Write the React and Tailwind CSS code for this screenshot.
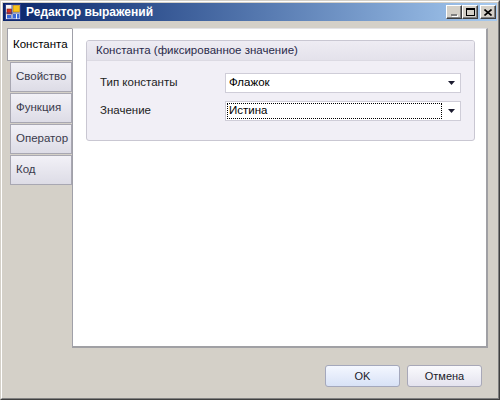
const font = { fontFamily: '"Liberation Sans", Arial, sans-serif' };

function AppIcon() {
  return (
    <svg width="16" height="16" viewBox="0 0 16 16">
      <rect x="0.5" y="0.5" width="15" height="15" fill="#f4f4f4" stroke="#2c3e8c" />
      <rect x="8" y="1.5" width="6.5" height="6.5" fill="#f7c21a" stroke="#b07a00" strokeWidth="0.6" />
      <rect x="2" y="5" width="4.5" height="5" fill="#d83020" stroke="#801810" strokeWidth="0.6" />
      <rect x="2" y="11" width="4" height="3.5" fill="#3a6ad8" />
      <rect x="8" y="10" width="3" height="4.5" fill="#3a6ad8" />
      <rect x="12" y="10" width="2.5" height="4.5" fill="#3a6ad8" />
      <line x1="7" y1="1" x2="7" y2="15" stroke="#2c3e8c" strokeWidth="0.8" />
      <line x1="1" y1="9" x2="15" y2="9" stroke="#2c3e8c" strokeWidth="0.8" />
    </svg>
  );
}

function CaptionButton({ children }) {
  return (
    <div className="w-[16px] h-[14px] bg-[#d4d0c8] border-t border-l border-t-white border-l-white border-r border-b border-r-[#404040] border-b-[#404040] shadow-[inset_-1px_-1px_#808080] flex items-center justify-center">
      {children}
    </div>
  );
}

function Combo({ value, focused }) {
  return (
    <div className="w-[236px] h-[20px] bg-white border border-[#cfcdd8] flex items-center">
      <div className="flex-1 h-full p-[1px]">
        <div
          className={
            focused
              ? "h-full border border-dotted border-black flex items-center pl-[1px] text-[11.5px] text-black"
              : "h-full border border-transparent flex items-center pl-[1px] text-[11.5px] text-black"
          }
        >
          {value}
        </div>
      </div>
      <div className="w-[17px] h-full flex items-center justify-center">
        <svg width="7" height="4" viewBox="0 0 7 4">
          <path d="M0 0H7L3.5 4Z" fill="#1c1c30" />
        </svg>
      </div>
    </div>
  );
}

export default function App() {
  const tabs = ["Свойство", "Функция", "Оператор", "Код"];

  return (
    <div style={font} className="w-[500px] h-[400px] bg-[#d4d0c8] border border-[#d4d0c8] border-r-[#404040] border-b-[#404040]">
      <div className="w-full h-full border border-white border-r-[#808080] border-b-[#808080] p-[1px] flex flex-col">
        {/* TITLE */}
        <div className="h-[18px] bg-gradient-to-r from-[#0a246a] to-[#a6caf0] flex items-center pl-[2px] pr-[1px]">
          <AppIcon />
          <span className="ml-[5px] text-white font-bold text-[12px] leading-none">Редактор выражений</span>
          <div className="ml-auto flex items-center">
            <CaptionButton>
              <div className="w-[6px] h-[2px] bg-[#808080] mt-[6px] shadow-[1px_1px_white]" />
            </CaptionButton>
            <CaptionButton>
              <div className="w-[9px] h-[8px] border border-black border-t-2" />
            </CaptionButton>
            <div className="w-[2px]" />
            <CaptionButton>
              <svg width="8" height="7" viewBox="0 0 8 7">
                <path d="M0.5 0.5L7.5 6.5M7.5 0.5L0.5 6.5" stroke="black" strokeWidth="1.6" />
              </svg>
            </CaptionButton>
          </div>
        </div>

        {/* BODY */}
        <div className="flex-1 flex pt-[7px] pl-[4px] pr-[9px]">
          {/* TABS */}
          <div className="w-[66px] flex flex-col gap-[1px]">
            <div className="h-[33px] bg-white border border-r-0 border-[#a0a0a8] flex items-center pl-[5px] text-[11.5px] text-black">
              Константа
            </div>
            {tabs.map((t) => (
              <div
                key={t}
                className="ml-[3px] h-[30px] bg-gradient-to-b from-[#f2f1f7] to-[#dddce6] border border-[#a8a7b2] flex items-center pl-[5px] text-[11.5px] text-[#3a3a4c]"
              >
                {t}
              </div>
            ))}
          </div>

          {/* PANEL */}
          <div className="flex-1 h-[320px] bg-white border-l border-r-2 border-b-2 border-t border-t-[#e4e4e8] border-l-[#a0a0a8] border-r-[#a0a0a4] border-b-[#a0a0a4] pt-[11px] pl-[13px] pr-[11px]">
            <div className="w-[389px] h-[101px] bg-[#f1eff6] border border-[#c9c7d2] rounded-[3px] overflow-hidden">
              <div className="h-[20px] bg-gradient-to-b from-[#eeecf3] to-[#e4e2eb] border-b border-[#dcdae3] flex items-center pl-[9px] text-[11.5px] text-[#2a2a4a]">
                Константа (фиксированное значение)
              </div>
              <div className="pt-[12px] pl-[13px] flex flex-col gap-[8px]">
                <div className="flex items-center">
                  <span className="w-[125px] text-[11.5px] text-[#222]">Тип константы</span>
                  <Combo value="Флажок" />
                </div>
                <div className="flex items-center">
                  <span className="w-[125px] text-[11.5px] text-[#222]">Значение</span>
                  <Combo value="Истина" focused />
                </div>
              </div>
            </div>
          </div>
        </div>

        {/* BUTTONS */}
        <div className="h-[22px] mt-[16px] mb-[10px] flex justify-end gap-[7px] pr-[15px]">
          <button className="w-[75px] h-[22px] rounded-[3px] border border-[#a4a8bc] bg-gradient-to-b from-[#f4f7ff] to-[#d8e2f6] text-[11px] font-normal text-[#1a1a2a]">
            OK
          </button>
          <button className="w-[75px] h-[22px] rounded-[3px] border border-[#a8a8b8] bg-gradient-to-b from-[#fafafd] to-[#e4e3ee] text-[11px] font-normal text-[#1a1a2a]">
            Отмена
          </button>
        </div>
      </div>
    </div>
  );
}
